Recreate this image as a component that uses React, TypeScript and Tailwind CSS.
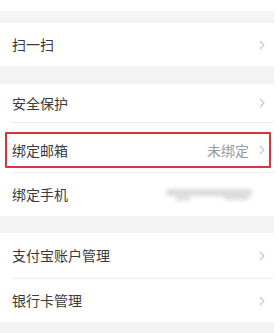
import { ReactNode } from 'react';

function Chevron() {
  return (
    <svg width="8" height="12" viewBox="0 0 8 12" className="shrink-0">
      <path d="M2 2 L6 6 L2 10" fill="none" stroke="#c6c6ca" strokeWidth="1.1" />
    </svg>
  );
}

function Gap({ h }: { h: string }) {
  return <div className={`w-[274px] bg-[#f3f3f5] ${h}`} />;
}

function Divider() {
  return (
    <div className="pl-3 w-[274px]">
      <div className="h-px bg-[#ececec]" />
    </div>
  );
}

interface RowProps {
  label: string;
  h: string;
  right?: ReactNode;
  chevron?: boolean;
  extra?: string;
}

function Row({ label, h, right, chevron = true, extra = '' }: RowProps) {
  return (
    <div className={`flex items-center pl-3 pr-[13px] ${h} ${extra}`}>
      <span className="flex-1 text-[14px] text-[#3a3a3a]">{label}</span>
      {right}
      {chevron && <Chevron />}
    </div>
  );
}

function BlurredPhone() {
  return (
    <div className="relative w-[88px] h-[14px] mr-[12px] blur-[2px]">
      <div className="absolute left-0 top-[1px] w-[86px] h-[7px] bg-[#d9d9dc] rounded" />
      <div className="absolute left-[10px] top-[5px] w-[14px] h-[8px] bg-[#e0e0e2]" />
      <div className="absolute left-[58px] top-[2px] w-[24px] h-[10px] bg-[#dcdcdf]" />
    </div>
  );
}

export default function App() {
  return (
    <div
      className="w-[279px] h-[333px] bg-white overflow-hidden relative"
      style={{ fontFamily: '"Noto Sans CJK SC", "Noto Sans", sans-serif' }}
    >
      <div className="h-[11px]" />
      <Gap h="h-[12px]" />
      <Row label="扫一扫" h="h-[43px]" />
      <Gap h="h-[18px]" />
      <Row label="安全保护" h="h-[38px]" />
      <Divider />
      <Row
        label="绑定邮箱"
        h="h-[49px]"
        extra="pt-[5px]"
        right={<span className="text-[14px] text-[#9a9a9a] mr-[9px]">未绑定</span>}
      />
      <Divider />
      <Row label="绑定手机" h="h-[43px]" chevron={false} right={<BlurredPhone />} />
      <Gap h="h-[17px]" />
      <Row label="支付宝账户管理" h="h-[45px]" />
      <Divider />
      <Row label="银行卡管理" h="h-[43px]" />
      <Gap h="h-[11px]" />

      <div className="absolute left-[5px] top-[132px] w-[266px] h-[36px] border-2 border-[#d8353b] rounded-[1px]" />
    </div>
  );
}
